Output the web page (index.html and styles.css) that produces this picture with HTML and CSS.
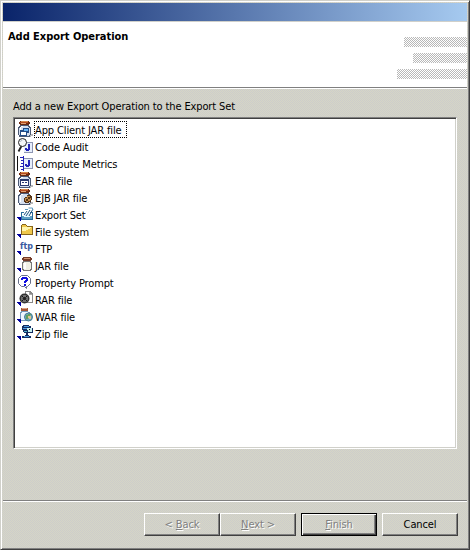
FILE: index.html
```
<!DOCTYPE html>
<html lang="en">
<head>
<meta charset="utf-8">
<title>Add Export Operation</title>
<link rel="stylesheet" href="styles.css">
</head>
<body>
<svg class="defs" width="0" height="0">
  <symbol id="jar" viewBox="0 0 17 17">
    <path d="M3 0h9v1h1v2h-1v1H3V3H2V1h1z" fill="#6b2a10"/><path d="M4 0h7v1H4z" fill="#d58a4c"/><path d="M3 1h8v1H3z" fill="#b54a20"/><path d="M4 2h5v1H4z" fill="#e0a070"/>
    <path d="M3 4h9v1h1v1h1v8h-1v2H2v-2H1V6h1V5h1z" fill="#4b5974"/><path d="M4 5h7v1h1v1h1v7h-1v1H3v-1H2V7h1V6h1z" fill="#d4deee"/><path d="M4 5h2v1H4zM3 6h1v7H3z" fill="#fff"/><path d="M14 13h2v2h-2v1h-1v-2h1z" fill="#b9b9b9"/>
  </symbol>
  <symbol id="link" viewBox="0 0 4 4"><path d="M0 0h4v4H3V3H2V2H1V1H0z" fill="#0000a0"/></symbol>
  <symbol id="jbox" viewBox="0 0 9 11"><path d="M0 0h9v11H0z" fill="#8e96b2"/><path d="M0 1h8v9H0z" fill="#e6eefc"/><path d="M4 2h2v6H5v1H2V8H1V6h2v1h1z" fill="#2424b8"/></symbol>
</svg>
<main class="dialog">
  <div class="titlebar"></div>
  <header class="header">
    <h1>Add Export Operation</h1>
    <div class="bars"><i class="bar b1"></i><i class="bar b2"></i><i class="bar b3"></i></div>
  </header>
  <section class="content">
    <p class="prompt"><span>Add a new Export Operation to the Export Set</span></p>
    <ul class="list">
      <li><svg viewBox="0 0 17 17"><use href="#jar" width="17" height="17"/><path d="M3 9h3V7h6v5h-2v3H3z" fill="#244c86"/><path d="M7 8h4v2H7z" fill="#69b5f4"/><path d="M4 11h5v3H4z" fill="#fff"/></svg><span class="focus">App Client JAR file</span></li>
      <li><svg viewBox="0 0 17 17"><use href="#jbox" x="7" y="4" width="9" height="11"/><g class="smooth"><path d="M4.500 8 1.500 13.500" stroke="#222" stroke-width="1.800"/><circle cx="5.500" cy="4.500" r="4" fill="#f4f6f8" stroke="#222"/><path d="M3.500 4a2 2 0 0 1 2-2" fill="none" stroke="#b4bcc8"/></g></svg><span>Code Audit</span></li>
      <li><svg viewBox="0 0 17 17"><path d="M0 1h1v15H0z" fill="#111"/><path d="M3 2h4v1H3zM4 5h3v1H4zM4 8h3v1H4zM3 11h4v1H3zM4 14h3v1H4z" fill="#2222b8"/><path d="M6 1h1v15H6z" fill="#2222b8"/><use href="#jbox" x="7" y="3" width="9" height="11"/></svg><span>Compute Metrics</span></li>
      <li><svg viewBox="0 0 17 17"><use href="#jar" width="17" height="17"/><path d="M3 7h9v7H3z" fill="#29396d"/><path d="M4 9h7v4H4z" fill="#fff"/><path d="M5 10h2v1H5zM8 10h2v1H8z" fill="#2d3b77"/></svg><span>EAR file</span></li>
      <li><svg viewBox="0 0 17 17"><use href="#jar" width="17" height="17"/><path d="M10 6h4v1h1v4h-1v2h-2v1H8v-1H7V9h1V8h2z" fill="#543417"/><path d="M10 7h3v1h-2v2H9v2H8V9h2zM13 9h1v2h-1v1h-2v1H9v-1h2v-2h2z" fill="#c08a4c"/></svg><span>EJB JAR file</span></li>
      <li><svg viewBox="0 0 17 17"><path d="M4 6h3v1H5v6h10V7h-2V6h3v8H4z" fill="#286b9b"/><path d="M5 10h2v1h6v-1h2v3H5z" fill="#5f9fc4"/><path d="M7 7h6v4H7z" fill="#e6f5ff"/><g class="smooth" fill="none" stroke="#26547c"><path d="m7 9 3-4m-1 5 4-6m-1 6 4-7"/><path d="M8 3.500h3M11.500 2h4v3" stroke="#5f9abe"/></g><use href="#link" y="11" width="4" height="4"/></svg><span>Export Set</span></li>
      <li><svg viewBox="0 0 17 17"><path d="M5 1h4v1h1v1h6v9H4V2h1z" fill="#87671d"/><path d="M5 2h4v1h1v1h5v7H5z" fill="#f0c84c"/><path d="M5 4h9v1h-1v1h-2v1H9v1H5z" fill="#fff5ad"/><use href="#link" y="11" width="4" height="4"/></svg><span>File system</span></li>
      <li><svg viewBox="0 0 17 17"><text class="ftp" x="3" y="9" textLength="13" lengthAdjust="spacingAndGlyphs">ftp</text><use href="#link" y="11" width="4" height="4"/></svg><span>FTP</span></li>
      <li><svg viewBox="0 0 17 17"><path d="M6 0h8v1h1v2h-1v1H6V3H5V1h1z" fill="#743a27"/><path d="M7 1h6v1H7z" fill="#d0916c"/><path d="M6 4h8v1h1v8h-1v1H6v-1H5V5h1z" fill="#777"/><path d="M7 5h6v1h1v6h-1v1H7v-1H6V6h1z" fill="#f0f0e4"/><path d="M7 6h2v6H7z" fill="#fff"/><use href="#link" y="11" width="4" height="4"/></svg><span>JAR file</span></li>
      <li><svg viewBox="0 0 17 17"><path class="smooth" d="M4.500 1.500h6l3 3v5l-3 3H9.500v2l-2-2h-3l-3-3v-5z" fill="#fff" stroke="#68708a"/><path d="M5 3h5v1h1v3h-1v1H9v1H7V7h1V6h1V5H6v1H4V4h1zM7 10h2v2H7z" fill="#1010df"/></svg><span>Property Prompt</span></li>
      <li><svg viewBox="0 0 17 17"><path d="M8 0h5l3 3v9H8z" fill="#888"/><path d="M9 1h3v3h3v7H9z" fill="#fff"/><path d="M12 1v2h3" fill="none" stroke="#aaa"/><g class="smooth"><circle cx="7.500" cy="7.500" r="5" fill="#333"/><circle cx="7.500" cy="7.500" r="3.500" fill="#777"/><circle cx="7.500" cy="7.500" r="1.800" fill="#222"/></g><path d="M5 5h1v1H5zM9 5h1v1H9zM5 9h1v1H5zM9 9h1v1H9z" fill="#111"/><use href="#link" y="11" width="4" height="4"/></svg><span>RAR file</span></li>
      <li><svg viewBox="0 0 17 17"><path d="M4 0h7v3H4z" fill="#a55534"/><path d="M5 0h5v1H5z" fill="#e0a481"/><path d="M4 3h7v1h2v9H3V4h1z" fill="#7699b9"/><path d="M5 4h6v1h1v7H4V5h1z" fill="#edf5ff"/><g class="smooth"><circle cx="11.500" cy="9" r="4" fill="#6fa8b8" stroke="#477c96"/></g><path d="M9 7h2V6h3v1h-1v2h-2v2H9z" fill="#62a05d"/><path d="M11 8h3v3h-2v-1h-1z" fill="#e4c58f"/><use href="#link" y="11" width="4" height="4"/></svg><span>WAR file</span></li>
      <li><svg viewBox="0 0 17 17"><path d="M6 0h6v1h2v2h2v5h-5v2h1v1h2v2H5v-2h3v-1h1V8H7V7H6V5H5V1h1z" fill="#132b60"/><path d="M7 1h5v1H7zM6 3h4v1H6zM7 11h5v1H7z" fill="#4b9ae0"/><path d="M10 3h5v4h-4V5h-1z" fill="#c8f0f0"/><path d="M12 4h1v1h-1z" fill="#111"/><path d="M7 6h3v1H7z" fill="#4bb0c8"/><use href="#link" y="11" width="4" height="4"/></svg><span>Zip file</span></li>
    </ul>
  </section>
  <footer class="footer">
    <button class="off" disabled>&lt; <u>B</u>ack</button><button class="off" disabled><u>N</u>ext &gt;</button><button class="off primary" disabled><u>F</u>inish</button><button class="cancel">Cancel</button>
  </footer>
</main>
</body>
</html>
```
FILE: styles.css
```
* { box-sizing: border-box; }
body { margin: 0; background: #d0d0ca; font-family: "DejaVu Sans Condensed", "DejaVu Sans", sans-serif; font-size: 11px; font-stretch: condensed; letter-spacing: -.12px; color: #000; }
.defs { display: block; }
.dialog {
  width: 470px; height: 550px; display: flex; flex-direction: column;
  border: 1px solid; border-color: #d0d0ca #404040 #404040 #d0d0ca;
  box-shadow: inset 1px 1px #fff, inset -1px -1px #808080;
  padding: 2px;
  background: repeating-conic-gradient(#d6d6c6 0 25%, #cdcdcb 0 50%) 0 0 / 2px 2px;
}
.titlebar { height: 18px; flex: none; background: linear-gradient(90deg, #0a246a, #a6caf0); }
.header { height: 68px; flex: none; display: flex; justify-content: space-between; background: #fff; border-top: 1px solid #d0d0ca; border-bottom: 1px solid #fff; box-shadow: inset 0 -1px #808080; }
h1 { margin: 8px 0 0 5px; font-size: 11px; line-height: 14px; font-weight: bold; letter-spacing: -.04px; white-space: nowrap; }
.bars { display: flex; flex-direction: column; align-items: flex-end; gap: 6px; padding-top: 15px; }
.bar { height: 10px; background: repeating-conic-gradient(#b8b8b8 0 25%, #fff 0 50%) 0 0 / 2px 2px; }
.b1 { width: 63px; }
.b2 { width: 54px; }
.b3 { width: 70px; }
.content { height: 411px; flex: none; padding: 11px 10px 0; }
.prompt { margin: 0 0 3px; line-height: 14px; white-space: nowrap; }
.list { list-style: none; width: 444px; height: 332px; margin: 0; padding: 3px 2px 2px; background: #fff; border: 1px solid; border-color: #808080 #fff #fff #808080; box-shadow: inset 1px 1px #404040, inset -1px -1px #d0d0ca; }
.list li { height: 17px; display: flex; align-items: center; }
.list svg { width: 17px; height: 17px; margin-left: 1px; flex: none; shape-rendering: crispEdges; }
.list .smooth { shape-rendering: auto; }
.list span { height: 17px; line-height: 19px; padding: 0 1px; white-space: nowrap; }
.list .focus { width: 93px; outline: 1px dotted #000; outline-offset: -1px; }
.ftp { font: bold 9px "DejaVu Sans", sans-serif; fill: #3b5aa0; letter-spacing: 0; }
.footer { flex: 1; display: flex; justify-content: flex-end; padding: 12px 9px 0 0; border-top: 1px solid #808080; box-shadow: inset 0 1px #fff; }
button { width: 76px; height: 23px; padding: 0 0 1px; font: inherit; letter-spacing: inherit; color: #000; background: transparent; border: 1px solid; border-color: #fff #404040 #404040 #fff; box-shadow: inset -1px -1px #808080; }
.off { color: #808080; text-shadow: 1px 1px #fff; }
.primary { margin-left: 5px; border-color: #000; box-shadow: inset 1px 1px #fff, inset -1px -1px #404040, inset -2px -2px #808080; }
.cancel { margin-left: 5px; }
```
